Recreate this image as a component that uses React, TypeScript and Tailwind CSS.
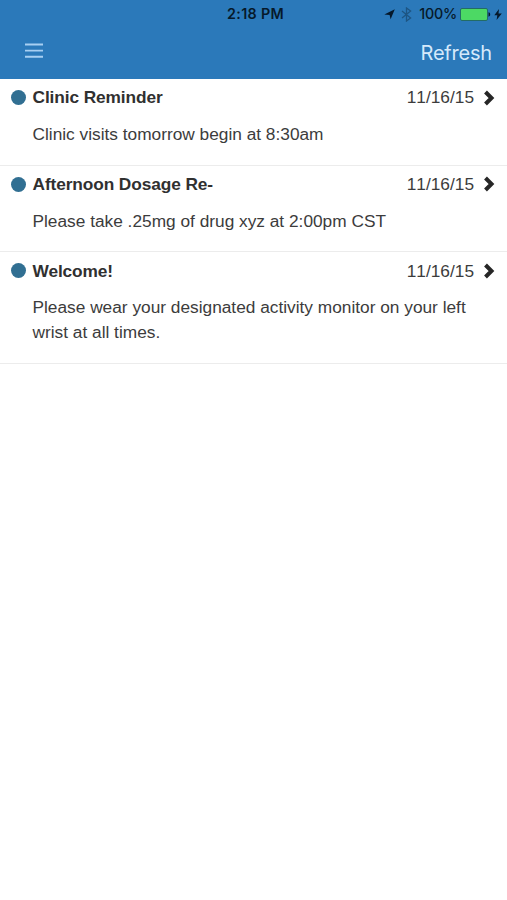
interface Message {
	id: number;
	title: string;
	date: string;
	body: string;
}

const messages: Message[] = [
	{
		id: 1,
		title: "Clinic Reminder",
		date: "11/16/15",
		body: "Clinic visits tomorrow begin at 8:30am",
	},
	{
		id: 2,
		title: "Afternoon Dosage Re-",
		date: "11/16/15",
		body: "Please take .25mg of drug xyz at 2:00pm CST",
	},
	{
		id: 3,
		title: "Welcome!",
		date: "11/16/15",
		body: "Please wear your designated activity monitor on your left wrist at all times.",
	},
];

function StatusBar() {
	return (
		<div className="grid h-7 grid-cols-[1fr_auto_1fr] items-center pr-[5px] font-['Inter',sans-serif] text-[#06192b]">
			<span />
			<span className="pl-[9px] font-semibold text-[14.3px] tracking-[0.3px]">
				2:18 PM
			</span>
			<div className="flex items-center justify-end">
				<svg className="h-[11px] w-[11px]" viewBox="0 0 11 11" fill="currentColor">
					<path d="M10.8.2 6.6 10.3 5.6 5.9.3 5.4Z" />
				</svg>
				<svg
					className="ml-[6px] h-[15px] w-[11px] text-[#1d5583]"
					viewBox="0 0 11 15"
					fill="none"
					stroke="currentColor"
					strokeWidth="1.3"
				>
					<path d="M1 4.1 9.6 11 5.5 14V1l4.1 3L1 10.9" />
				</svg>
				<span className="ml-[7px] font-medium text-[14.3px] tracking-[-0.2px]">
					100%
				</span>
				<svg className="ml-[3px] h-[13px] w-[31px]" viewBox="0 0 31 13">
					<rect
						x="0.5"
						y="0.5"
						width="27"
						height="12"
						rx="1.5"
						fill="#4cd964"
						stroke="#236c66"
					/>
					<path d="M28.5 4.3c2.3.5 2.3 3.9 0 4.4Z" fill="#06192b" />
				</svg>
				<svg className="ml-[3px] h-[11px] w-[8px]" viewBox="0 0 8 11" fill="currentColor">
					<path d="M5 0 .3 6.3h3L2.6 11 7.8 4.5H4.5Z" />
				</svg>
			</div>
		</div>
	);
}

function Header() {
	return (
		<header className="h-[79px] bg-[#2b79ba] text-[#d5e9fb]">
			<StatusBar />
			<div className="flex h-12 items-center justify-between pr-[15px] pl-[25px]">
				<button type="button" aria-label="Menu">
					<svg
						className="-mt-[3px] h-[17px] w-[18px] text-[#a8cff2]"
						viewBox="0 0 18 17"
						stroke="currentColor"
						strokeWidth="1.9"
					>
						<path d="M0 2.5h18M0 8.6h18M0 14.7h18" />
					</svg>
				</button>
				<button
					type="button"
					className="pt-0.5 font-['Inter',sans-serif] text-[20px] tracking-[-0.2px]"
				>
					Refresh
				</button>
			</div>
		</header>
	);
}

function MessageRow({ message }: { message: Message }) {
	return (
		<li className="border-[#ececec] border-b pt-[6.4px] pr-[11px] pb-[18.2px] pl-[10.5px] text-[#3c3c3c] text-[17.3px] leading-[24.5px]">
			<div className="flex items-center">
				<span className="h-[15px] w-[15px] shrink-0 rounded-full bg-[#316f92]" />
				<h2 className="ml-[7px] flex-1 font-bold text-[#303030] tracking-[-0.1px]">
					{message.title}
				</h2>
				<span className="[font-kerning:none]">{message.date}</span>
				<svg
					className="ml-[9px] h-[16px] w-[13px] text-[#262626]"
					viewBox="0 0 13 16"
					fill="none"
					stroke="currentColor"
					strokeWidth="4"
				>
					<path d="m2.5 2 6 6-6 6" />
				</svg>
			</div>
			<p className="mt-[12.1px] pr-5 pl-[22px]">{message.body}</p>
		</li>
	);
}

export default function App() {
	return (
		<div className="min-h-screen bg-white font-['Liberation_Sans',sans-serif]">
			<Header />
			<ul>
				{messages.map((message) => (
					<MessageRow key={message.id} message={message} />
				))}
			</ul>
		</div>
	);
}
